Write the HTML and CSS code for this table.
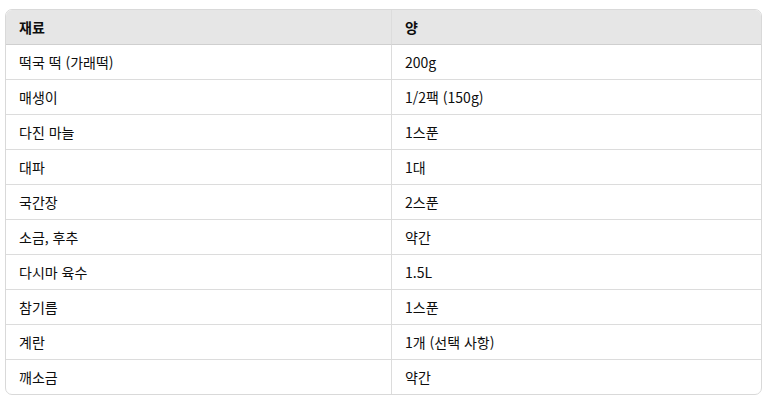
FILE: index.html
```html
<!DOCTYPE html>
<html lang="ko">
<head>
<meta charset="utf-8">
<link rel="stylesheet" href="styles.css">
</head>
<body>
<div class="wrap">
<table class="tbl">
<thead>
<tr><th class="c1">재료</th><th>양</th></tr>
</thead>
<tbody>
<tr><td class="c1">떡국 떡 (가래떡)</td><td>200g</td></tr>
<tr><td class="c1">매생이</td><td>1/2팩 (150g)</td></tr>
<tr><td class="c1">다진 마늘</td><td>1스푼</td></tr>
<tr><td class="c1">대파</td><td>1대</td></tr>
<tr><td class="c1">국간장</td><td>2스푼</td></tr>
<tr><td class="c1">소금, 후추</td><td>약간</td></tr>
<tr><td class="c1">다시마 육수</td><td>1.5L</td></tr>
<tr><td class="c1">참기름</td><td>1스푼</td></tr>
<tr><td class="c1">계란</td><td>1개 (선택 사항)</td></tr>
<tr><td class="c1">깨소금</td><td>약간</td></tr>
</tbody>
</table>
</div>
</body>
</html>
```
FILE: styles.css
```css
html, body {
  margin: 0;
  padding: 0;
  background: #ffffff;
}
body {
  font-family: "Noto Sans CJK KR", "Noto Sans", "Liberation Sans", sans-serif;
  font-size: 14px;
  color: #0d0d0d;
}
.wrap {
  padding: 9px 0 0 5px;
}
.tbl {
  width: 757px;
  border-collapse: separate;
  border-spacing: 0;
  border: 1px solid #d9d9d9;
  border-radius: 7px;
  overflow: hidden;
  table-layout: fixed;
}
.tbl th, .tbl td {
  text-align: left;
  padding: 0 13px;
  height: 34px;
  line-height: 20px;
  border-bottom: 1px solid #dcdcdc;
  vertical-align: middle;
}
.tbl tbody tr:last-child td {
  border-bottom: none;
}
.tbl .c1 {
  width: 359px;
  border-right: 1px solid #dcdcdc;
}
.tbl th {
  background: #e6e6e6;
  font-weight: 700;
  height: 34px;
  border-bottom: 1px solid #cfcfcf;
}
```
